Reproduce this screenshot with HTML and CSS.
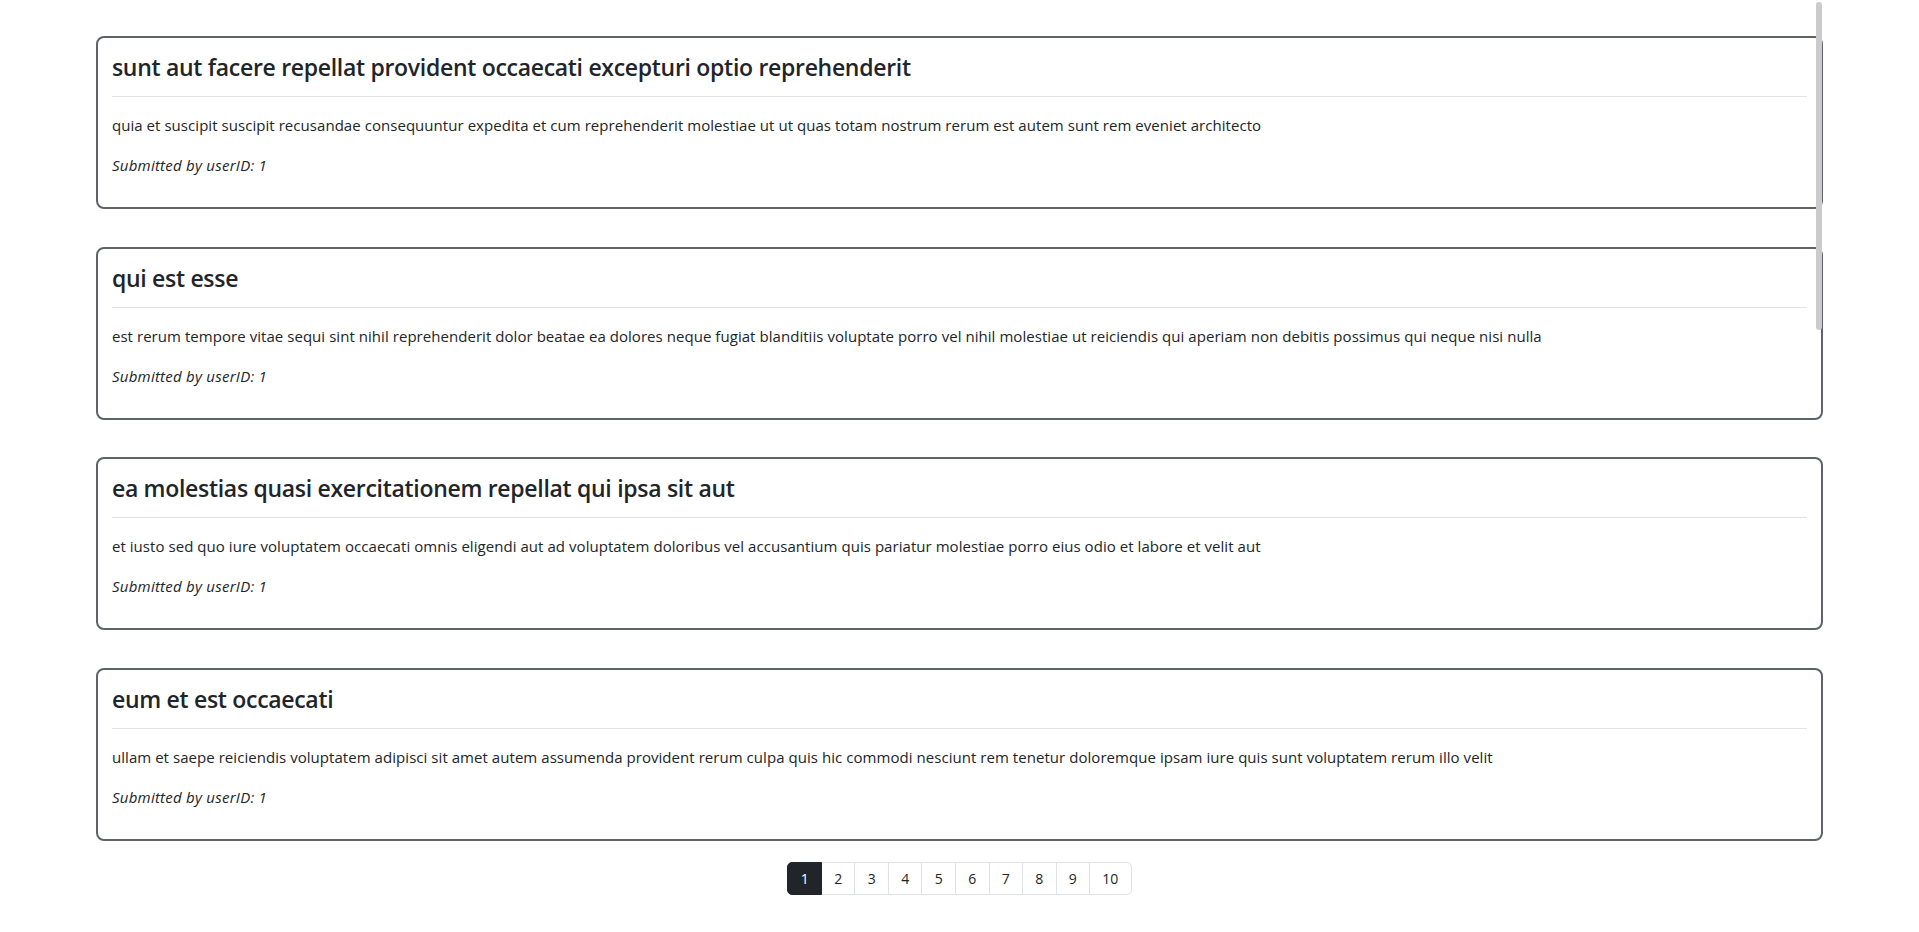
FILE: index.html
```html
<!DOCTYPE html>
<html lang="en">
<head>
<meta charset="utf-8">
<title>Posts</title>
<link rel="stylesheet" href="styles.css">
</head>
<body>
<div class="page">
  <main class="posts">
    <article class="post">
      <h4 class="post-title">sunt aut facere repellat provident occaecati excepturi optio reprehenderit</h4>
      <hr class="post-rule">
      <p class="post-body">quia et suscipit suscipit recusandae consequuntur expedita et cum reprehenderit molestiae ut ut quas totam nostrum rerum est autem sunt rem eveniet architecto</p>
      <p class="post-meta">Submitted by userID: 1</p>
    </article>
    <article class="post">
      <h4 class="post-title">qui est esse</h4>
      <hr class="post-rule">
      <p class="post-body">est rerum tempore vitae sequi sint nihil reprehenderit dolor beatae ea dolores neque fugiat blanditiis voluptate porro vel nihil molestiae ut reiciendis qui aperiam non debitis possimus qui neque nisi nulla</p>
      <p class="post-meta">Submitted by userID: 1</p>
    </article>
    <article class="post">
      <h4 class="post-title">ea molestias quasi exercitationem repellat qui ipsa sit aut</h4>
      <hr class="post-rule">
      <p class="post-body">et iusto sed quo iure voluptatem occaecati omnis eligendi aut ad voluptatem doloribus vel accusantium quis pariatur molestiae porro eius odio et labore et velit aut</p>
      <p class="post-meta">Submitted by userID: 1</p>
    </article>
    <article class="post">
      <h4 class="post-title">eum et est occaecati</h4>
      <hr class="post-rule">
      <p class="post-body">ullam et saepe reiciendis voluptatem adipisci sit amet autem assumenda provident rerum culpa quis hic commodi nesciunt rem tenetur doloremque ipsam iure quis sunt voluptatem rerum illo velit</p>
      <p class="post-meta">Submitted by userID: 1</p>
    </article>
  </main>
  <nav class="pager">
    <ul class="pagination">
      <li class="page-item active"><a class="page-link" href="#">1</a></li>
      <li class="page-item"><a class="page-link" href="#">2</a></li>
      <li class="page-item"><a class="page-link" href="#">3</a></li>
      <li class="page-item"><a class="page-link" href="#">4</a></li>
      <li class="page-item"><a class="page-link" href="#">5</a></li>
      <li class="page-item"><a class="page-link" href="#">6</a></li>
      <li class="page-item"><a class="page-link" href="#">7</a></li>
      <li class="page-item"><a class="page-link" href="#">8</a></li>
      <li class="page-item"><a class="page-link" href="#">9</a></li>
      <li class="page-item"><a class="page-link" href="#">10</a></li>
    </ul>
  </nav>
</div>
<div class="scroll-thumb"></div>
</body>
</html>
```
FILE: styles.css
```css
* { box-sizing: border-box; }

html, body {
  margin: 0;
  padding: 0;
  height: 100%;
  overflow: hidden;
  background: #ffffff;
}

body {
  font-family: "Open Sans", "Noto Sans", "Liberation Sans", sans-serif;
  color: #212529;
}

.page {
  width: 90%;
  margin: 0 auto;
  padding-top: 36px;
}

.posts {
  display: flex;
  flex-direction: column;
  gap: 37.5px;
}

.post {
  height: 173px;
  border: 2px solid #5f6368;
  border-radius: 8px;
  padding: 15px 14px 0 14px;
}

.post-title {
  margin: 0;
  font-size: 23px;
  font-weight: 600;
  line-height: 29px;
  letter-spacing: -0.3px;
}

.post-rule {
  margin: 14px 0 17px 0;
  border: 0;
  border-top: 1px solid #e3e3e3;
}

.post-body {
  margin: 0;
  font-size: 15px;
  line-height: 22px;
  letter-spacing: 0.05px;
}

.post-meta {
  margin: 18px 0 0 0;
  font-size: 15px;
  line-height: 22px;
  font-style: italic;
  letter-spacing: 0.25px;
}

.pager {
  display: flex;
  justify-content: center;
  padding-top: 21.5px;
}

.pagination {
  display: flex;
  list-style: none;
  margin: 0;
  padding: 0;
}

.page-item + .page-item {
  margin-left: -1px;
}

.page-link {
  display: block;
  height: 33px;
  line-height: 31px;
  padding: 0 12.25px;
  font-size: 14px;
  color: #212529;
  text-decoration: none;
  background: #ffffff;
  border: 1px solid #dee2e6;
}

.page-item:first-child .page-link {
  border-top-left-radius: 5px;
  border-bottom-left-radius: 5px;
}

.page-item:last-child .page-link {
  border-top-right-radius: 5px;
  border-bottom-right-radius: 5px;
}

.page-item.active .page-link {
  background: #212529;
  border-color: #212529;
  color: #ffffff;
  position: relative;
  z-index: 1;
}

.scroll-thumb {
  position: fixed;
  top: 2px;
  left: 1816px;
  width: 6px;
  height: 328px;
  border-radius: 3px;
  background: #cbcbcb;
}
```
